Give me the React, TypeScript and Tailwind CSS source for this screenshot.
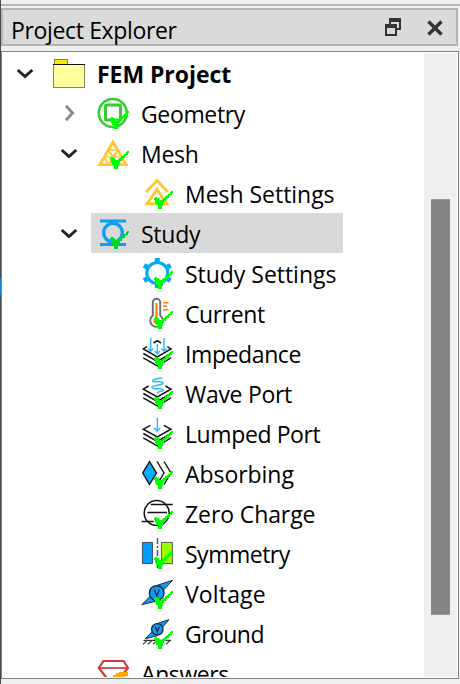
import React from "react";

const Check = ({ color = "#00ff00" }: { color?: string }) => (
  <path
    d="M13 20h2v1h2v2h3v-1h1v-1h2v-2h2v-1h1v-1h2v-2h1v-1h2v2h-1v2h-2v1h-1v2h-2v1h-1v2h-2v2h-1v3h-1v3h-4v-4h-2v-2h-1v-3h-1z"
    fill={color}
    shapeRendering="crispEdges"
  />
);

const Geometry = () => (
  <g fill="none" stroke="#32cd32">
    <circle cx="14.8" cy="16" r="14" strokeWidth="2.6" />
    <rect x="7.5" y="8" width="15" height="15" rx="1" strokeWidth="3" />
  </g>
);

const Mesh = () => (
  <g fill="none" stroke="#ffc72c">
    <path d="M15 5 1.8 27.7h26.4z" strokeWidth="2.8" />
    <path d="M10 13h10M6 20h18M10 13l5 7 5-7M6 20l4.500 7.500L15 20l4.500 7.500L24 20" strokeWidth="1.7" />
  </g>
);

const MeshSettings = () => (
  <g fill="none" stroke="#ffc72c" strokeWidth="2.9">
    <path d="M4.2 15 15 3.5 25.8 15" />
    <path d="M15 12.5 5 26.800h20z" />
  </g>
);

const Study = () => (
  <g fill="none" stroke="#0aa0f5" strokeWidth="3">
    <path d="M2 4h26M2 27.500h26" />
    <circle cx="15" cy="15.7" r="9.3" strokeWidth="3.300" />
  </g>
);

const Gear = () => (
  <g fill="none" stroke="#00aaff">
    <circle cx="15.3" cy="16" r="10.5" strokeWidth="3.2" />
    <path
      d="M15.3 5V1M15.3 31v-4M5.8 10.5 2 8.3M24.8 10.5l3.8-2.2M5.8 21.5 2 23.7M24.8 21.5l3.8 2.2"
      strokeWidth="5"
    />
  </g>
);

const Thermometer = () => (
  <g fill="none">
    <path d="M10.8 18.5V5.5a3.7 3.7 0 0 1 7.4 0v13a6.3 6.3 0 1 1-7.4 0z" stroke="#6e6e6e" strokeWidth="1.9" />
    <path d="M14.5 6v17" stroke="#ff8000" strokeWidth="2.2" />
    <circle cx="14.5" cy="24" r="3" fill="#ff8000" />
    <path d="M21 5.7h5.5M21 9.2h4M21 12.7h5.5" stroke="#ff8000" strokeWidth="1.6" />
  </g>
);

const Layers = () => (
  <path d="m1.300 16.500 14 8 13.700-8M1.300 20.800l14 8 13.700-8" strokeWidth="1.500" />
);

const Impedance = () => (
  <g fill="none" stroke="#111" strokeWidth="1.5">
    <path d="M5 9.5 1.3 12l14 7.8L29 12l-3.7-2.5M11.5 6l3.8-2.3L19 6" />
    <Layers />
    <path
      d="M8.7 1v13M15.3 7v9M22 1v13M6 11.5l2.7 2.7 2.7-2.7M12.6 14l2.7 2.7L18 14M19.3 11.5l2.7 2.7 2.7-2.7"
      stroke="#35b8ff"
    />
  </g>
);

const WavePort = () => (
  <g fill="none" stroke="#111" strokeWidth="1.5">
    <path d="M6.5 9 1.3 12.2l14 7.6 13.7-7.6L23.5 9" />
    <Layers />
    <path
      d="M20.5 1c-4 .2-10 1.5-10 3 0 2 10.5-.5 10.5 2 0 2.5-11 2-11 4.500s11.500 0 11.500 2.500c0 2-6 .5-6 3.500"
      stroke="#35b8ff"
    />
  </g>
);

const LumpedPort = () => (
  <g fill="none" stroke="#111" strokeWidth="1.5">
    <path d="M8.500 8.300 1.300 12.200l14 7.600 13.700-7.600-7.200-3.900" />
    <Layers />
    <path d="M15.300 1v13M12.300 11l3 3.200 3-3.200" stroke="#35b8ff" />
  </g>
);

const Absorbing = () => (
  <g fill="none" stroke="#111" strokeWidth="1.400">
    <path d="M7.500 4.500.7 16l6.800 11.500L14.500 16z" fill="#00aaff" />
    <path d="M15 4.500 22 16l-7 11.500M22 4.500 29 16l-7 11.500" />
  </g>
);

const ZeroCharge = () => (
  <g fill="none" stroke="#111" strokeWidth="1.500">
    <circle cx="14.700" cy="16" r="12.500" />
    <path d="M8.700 7.500h22M5.500 15.500H25M-.3 24.500h12" />
  </g>
);

const Symmetry = () => (
  <g stroke="#333" strokeWidth=".8">
    <path d="M.4 5.400h10.200v21.200H.4z" fill="#0099ff" />
    <path d="M19.400 5.400h11v21.200h-11z" fill="#99ff00" />
    <path d="M15.500 1v31" stroke="#555" strokeWidth="1.500" strokeDasharray="6 2 2 2" />
  </g>
);

const Voltage = () => (
  <g stroke="#1b2a3a" strokeWidth="1" fill="#0a9cff">
    <path d="M-.3 27.700 9 18.500l5.700 5.500zM30.500 3.300 14.700 8.500l6.500 5z" />
    <circle cx="14.700" cy="16" r="7.300" strokeWidth="1.400" />
    <path d="m12.300 12.800 2.500 6.200 2.500-6.200" fill="none" strokeWidth="1.300" />
  </g>
);

const Ground = () => (
  <g stroke="#1b2a3a" strokeWidth="1" fill="#0a9cff">
    <path d="m3.500 21.700 7.500-8 4.300 5zM26.900 2.700 14.500 6.800l5.500 4z" />
    <circle cx="15.300" cy="12.300" r="5.700" strokeWidth="1.300" />
    <path d="m13.300 9.800 2 5 2-5" fill="none" strokeWidth="1.200" />
    <path d="M1.500 23.300H29M5 23.300l-4 4M10 23.300l-4 4M15 23.300l-4 4M28 23.300l-4 4" fill="none" stroke="#333" strokeWidth="1.200" />
  </g>
);

const Answers = () => (
  <g fill="none" stroke="#d03a3a" strokeWidth="2.200">
    <path d="M5.500 4h20L30 11 15 29 .8 11z" />
    <path d="M1 11h28" strokeWidth="1.700" />
    <path d="M15 20v-2h3v-2h3v-1h9v4h-3v3H15z" fill="#ffa500" stroke="none" shapeRendering="crispEdges" />
  </g>
);

type Item = {
  label: string;
  level: 1 | 2;
  icon: () => React.ReactElement;
  arrow?: "open" | "closed";
  spacing: string;
};

const items: Item[] = [
  { label: "Geometry", level: 1, icon: Geometry, arrow: "closed", spacing: "tracking-[-0.35px]" },
  { label: "Mesh", level: 1, icon: Mesh, arrow: "open", spacing: "tracking-[-0.3px]" },
  { label: "Mesh Settings", level: 2, icon: MeshSettings, spacing: "tracking-[-0.03px]" },
  { label: "Study", level: 1, icon: Study, arrow: "open", spacing: "tracking-[-0.25px]" },
  { label: "Study Settings", level: 2, icon: Gear, spacing: "tracking-[-0.03px]" },
  { label: "Current", level: 2, icon: Thermometer, spacing: "tracking-[-0.4px]" },
  { label: "Impedance", level: 2, icon: Impedance, spacing: "tracking-[-0.4px]" },
  { label: "Wave Port", level: 2, icon: WavePort, spacing: "tracking-[-0.3px]" },
  { label: "Lumped Port", level: 2, icon: LumpedPort, spacing: "tracking-[-0.4px]" },
  { label: "Absorbing", level: 2, icon: Absorbing, spacing: "tracking-[-0.05px]" },
  { label: "Zero Charge", level: 2, icon: ZeroCharge, spacing: "tracking-[-0.1px]" },
  { label: "Symmetry", level: 2, icon: Symmetry, spacing: "tracking-[-0.5px]" },
  { label: "Voltage", level: 2, icon: Voltage, spacing: "tracking-[0.15px]" },
  { label: "Ground", level: 2, icon: Ground, spacing: "tracking-[-0.55px]" },
  { label: "Answers", level: 1, icon: Answers, spacing: "tracking-[-0.4px]" },
];

const Arrow = ({ kind }: { kind: "open" | "closed" }) => (
  <svg className="size-5 shrink-0" viewBox="0 0 20 20" fill="none" strokeWidth="2.9">
    {kind === "open" ? (
      <path d="m2.700 7 7.300 6.500L17.300 7" stroke="#222" />
    ) : (
      <path d="m7 2.700 6.500 7.300L7 17.300" stroke="#8c8c8c" />
    )}
  </svg>
);

const Row = ({ item }: { item: Item }) => {
  const Icon = item.icon;
  const selected = item.label === "Study";
  return (
    <div className="flex h-10 shrink-0 items-center">
      <div className={item.level === 1 ? "flex w-[89px] shrink-0 justify-end pr-[12px]" : "w-[133px] shrink-0"}>
        {item.arrow && <Arrow kind={item.arrow} />}
      </div>
      <div className={`flex h-10 items-center pl-[7px] ${selected ? "w-[252px] bg-[#d9d9d9]" : ""}`}>
        <svg className="size-8 shrink-0 overflow-visible" viewBox="0 0 32 32">
          <Icon />
          {item.label !== "Answers" && <Check color={selected ? "#00d52b" : "#00ff00"} />}
        </svg>
        <span className={`ml-[11px] whitespace-nowrap pt-px text-[23px] leading-8 ${item.spacing}`}>{item.label}</span>
      </div>
    </div>
  );
};

export default function App() {
  return (
    <div className="flex h-[684px] w-[460px] overflow-hidden bg-[#efefef] font-['Open_Sans',sans-serif] text-black">
      <div className="flex w-px shrink-0 flex-col bg-[#4a4a4e] pt-[278px]">
        <div className="h-[17px] bg-[#1683d8]" />
      </div>
      <div className="flex min-w-0 flex-1 flex-col">
        <div className="mt-1 h-0.5 shrink-0 bg-[#b8b8b8]" />
        <header className="mt-0.5 flex h-[38px] w-[457px] shrink-0 items-center border-2 border-[#b5b5b5] bg-[#dadada] pl-2">
          <h1 className="pt-[5px] text-[23px] leading-7 tracking-[-0.35px]">Project Explorer</h1>
          <svg className="ml-auto h-[18px] w-4" viewBox="0 0 16 18" fill="#303436" shapeRendering="crispEdges">
            <path fillRule="evenodd" d="M4 0h12v12h-4v-2h2V4H6v2H4z" />
            <path fillRule="evenodd" d="M0 6h12v12H0zM2 10v6h8v-6z" />
          </svg>
          <svg className="ml-[26px] mr-[13px] mt-[2px] size-4" viewBox="0 0 16 16" fill="none" stroke="#303436" strokeWidth="3.400">
            <path d="m1.500 1.500 13 13m0-13-13 13" />
          </svg>
        </header>
        <main className="mt-[5px] flex h-[628px] w-[458px] shrink-0 border border-[#808288] bg-white pb-px pr-px pt-px">
          <div className="flex min-w-0 flex-1 flex-col overflow-hidden">
            <div className="flex h-10 shrink-0 items-center pl-[13px]">
              <Arrow kind="open" />
              <svg className="ml-[18px] h-[30px] w-8" viewBox="0 0 32 30" shapeRendering="crispEdges">
                <path d="M1 1h13v6H1z" fill="#f5ed00" stroke="#8c8620" />
                <path d="M.5 6.500h31v22.500H.5z" fill="#ffff9e" stroke="#85855a" />
                <path d="M0 6.500h32" stroke="#111" />
              </svg>
              <span className="ml-3 whitespace-nowrap pt-px text-[23px] font-bold leading-8 tracking-[-0.05px]">FEM Project</span>
            </div>
            {items.map((item) => (
              <Row key={item.label} item={item} />
            ))}
          </div>
          <div className="flex w-[33px] shrink-0 flex-col items-center bg-[#efefef] pt-[146px]">
            <div className="h-[416px] w-[19px] border-y border-[#9a9a9a] bg-[#858585]" />
          </div>
        </main>
      </div>
    </div>
  );
}
